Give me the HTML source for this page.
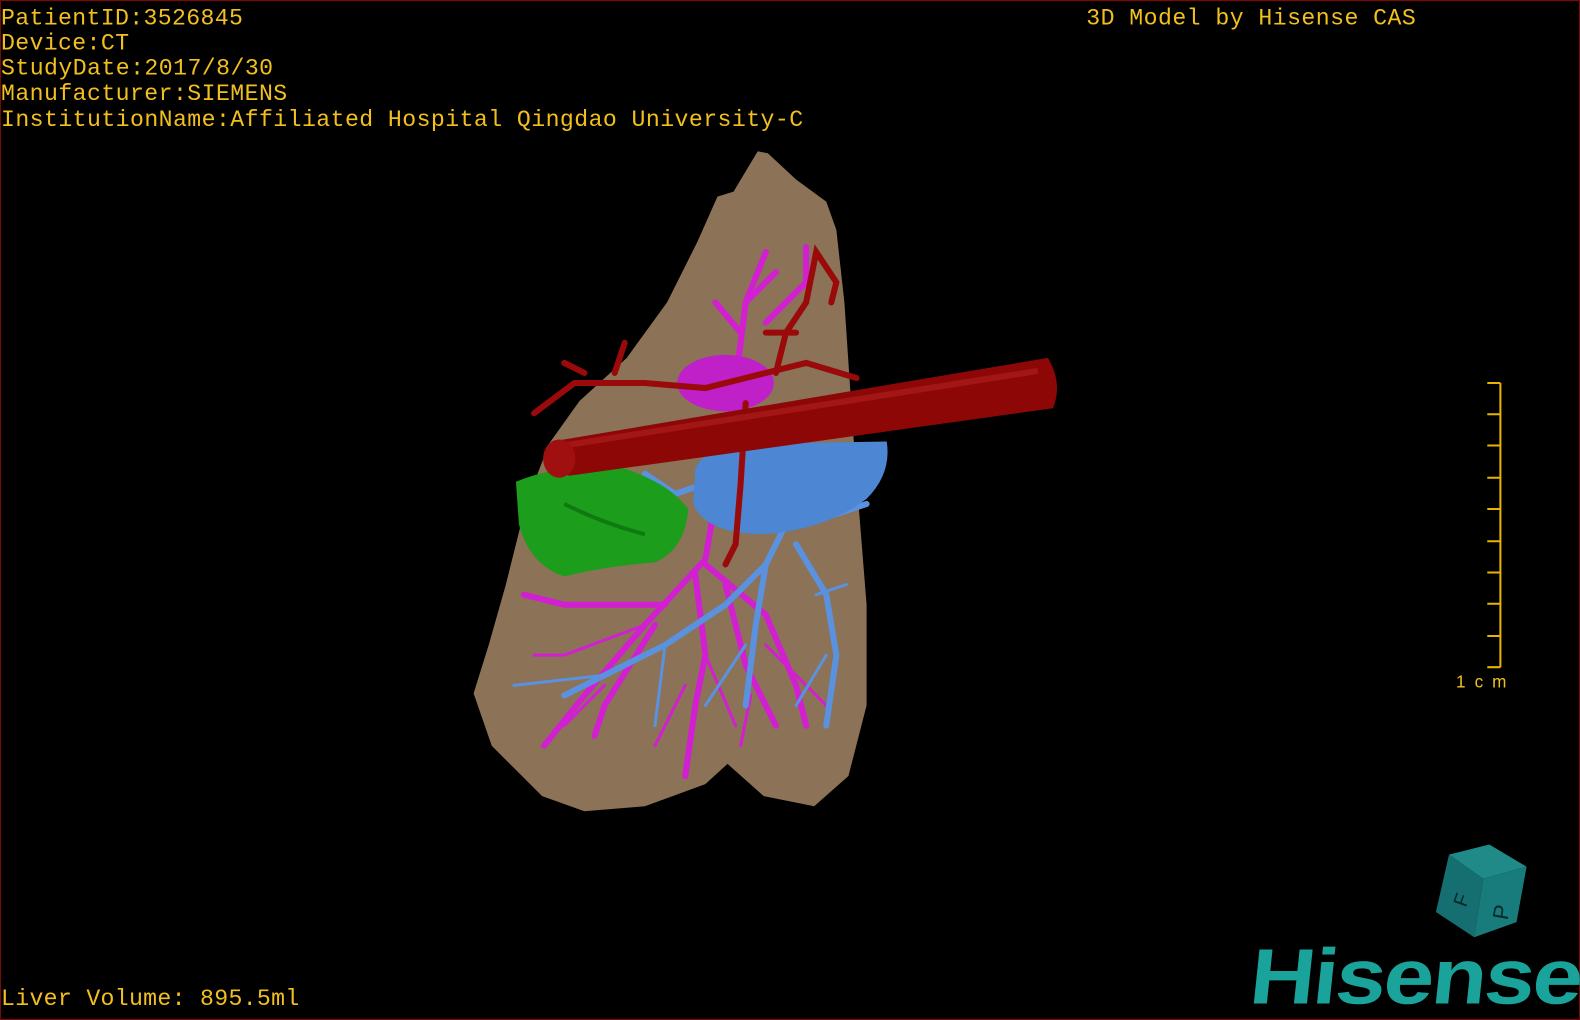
<!DOCTYPE html>
<html><head><meta charset="utf-8"><style>
html,body{margin:0;padding:0;background:#000;overflow:hidden}
svg{display:block}
text{font-family:"Liberation Mono","Noto Sans CJK SC",monospace;fill:#f2c01e}
</style></head><body>
<svg width="1580" height="1020" viewBox="0 0 1568 1012" xmlns="http://www.w3.org/2000/svg">
<rect x="0" y="0" width="1568" height="1012" fill="#000" stroke="#7a0a0a" stroke-width="2"/>
<g font-size="23">
<text x="1" y="24" textLength="240">PatientID:3526845</text>
<text x="1" y="49" textLength="127">Device:CT</text>
<text x="1" y="74" textLength="270">StudyDate:2017/8/30</text>
<text x="1" y="99" textLength="284">Manufacturer:SIEMENS</text>
<text x="1" y="125" textLength="796">InstitutionName:Affiliated Hospital Qingdao University-C</text>
<text x="1078" y="24" textLength="327">3D Model by Hisense CAS</text>
<text x="1" y="997" textLength="296">Liver Volume: 895.5ml</text>
</g>
<!-- liver -->
<path d="M752,150 L740,170 L728,190 L712,195 L692,240 L662,300 L622,355 L575,398 L545,440 L522,500 L502,580 L485,640 L470,688 L488,740 L538,790 L580,805 L640,800 L700,778 L722,758 L758,790 L808,800 L842,770 L860,700 L860,600 L852,500 L846,420 L838,300 L830,228 L820,200 L790,178 L762,152 Z" fill="#8c7256"/>
<!-- magenta branches -->
<g stroke="#d21fd2" fill="none" stroke-linecap="round">
<path d="M700,555 L640,620 L580,690 L540,740 M660,600 L560,600 L520,590 M690,570 L700,650 L690,700 L680,770 M700,560 L760,610 L790,680 L800,720 M720,580 L740,660 L770,720 M650,620 L600,700 L590,730 M700,555 L730,380 L740,300 L760,250 M735,330 L710,300 M760,320 L800,280 L800,245 M740,300 L770,270" stroke-width="6"/>
<path d="M640,620 L560,650 L530,650 M600,680 L560,720 M680,680 L650,740 M760,640 L820,700 M745,690 L735,740 M700,650 L730,720" stroke-width="3"/>
</g>
<!-- blue branches -->
<g stroke="#5a92e0" fill="none" stroke-linecap="round">
<path d="M780,520 L760,560 L720,600 L660,640 L600,670 L560,690 M760,560 L750,620 L740,700 M790,540 L820,590 L830,650 L820,720 M780,520 L830,510 L860,500 M700,480 L670,490 L640,470" stroke-width="6"/>
<path d="M600,670 L510,680 M740,640 L700,700 M810,590 L840,580 M820,650 L790,700 M660,640 L650,720" stroke-width="3"/>
</g>
<!-- blue blob -->
<path d="M690,465 Q700,440 760,440 L880,438 Q885,470 860,495 Q820,525 760,530 Q700,530 688,500 Z" fill="#4d86d2"/>
<!-- green -->
<path d="M512,478 Q560,458 620,465 Q665,480 683,505 Q680,545 650,558 Q600,562 560,572 Q525,560 515,520 Z" fill="#1c9e1c"/>
<path d="M560,500 Q600,520 640,530" stroke="#0f7a0f" stroke-width="4" fill="none"/>
<!-- magenta blob -->
<ellipse cx="720" cy="380" rx="48" ry="28" fill="#c020c8"/>
<!-- red small branches -->
<g stroke="#9a0a0a" fill="none" stroke-linecap="round" stroke-width="6">
<path d="M530,410 L570,380 L640,380 L700,385 L760,370 L800,360 L850,375 M610,370 L620,340 M580,370 L560,360 M770,370 L780,330 L800,300 L810,250 L830,280 L825,300 M790,330 L760,330 M740,400 L735,480 L730,540 L720,560"/>
</g>
<!-- red aorta -->
<path d="M548,438 L1040,355 Q1055,380 1045,405 L565,472 Q540,460 548,438 Z" fill="#8e0707"/>
<path d="M560,442 L1030,368" stroke="#b02020" stroke-width="6" opacity="0.6"/>
<ellipse cx="555" cy="455" rx="16" ry="19" fill="#a01010"/>
<!-- scale bar -->
<g stroke="#e8b400" stroke-width="2">
<line x1="1489" y1="380" x2="1489" y2="662"/>
<path d="M1476,380H1489M1476,411H1489M1476,442H1489M1476,474H1489M1476,505H1489M1476,537H1489M1476,568H1489M1476,599H1489M1476,631H1489M1476,662H1489"/>
</g>
<text x="1445" y="682" font-size="17" textLength="50" style="font-family:'Liberation Sans',sans-serif;fill:#f2c01e">1cm</text>
<!-- cube -->
<polygon points="1438,848 1478,838 1515,860 1472,872" fill="#1f8a88"/>
<polygon points="1438,848 1472,872 1463,930 1425,905" fill="#156f70"/>
<polygon points="1472,872 1515,860 1505,915 1463,930" fill="#187b7c"/>
<text x="1440" y="900" font-size="20" transform="rotate(-70 1448 890)" style="font-family:'Liberation Sans',sans-serif;fill:#0a2a2a">F</text>
<text x="1478" y="912" font-size="22" transform="rotate(-80 1488 902)" style="font-family:'Liberation Sans',sans-serif;fill:#0a2a2a">P</text>
<!-- logo -->
<text x="1238" y="996" font-size="78" font-weight="bold" textLength="328" lengthAdjust="spacingAndGlyphs" transform="skewX(-6) translate(105 0)" style="font-family:'Liberation Sans',sans-serif;fill:#19a39a;letter-spacing:-2px">Hisense</text>
</svg>
</body></html>
